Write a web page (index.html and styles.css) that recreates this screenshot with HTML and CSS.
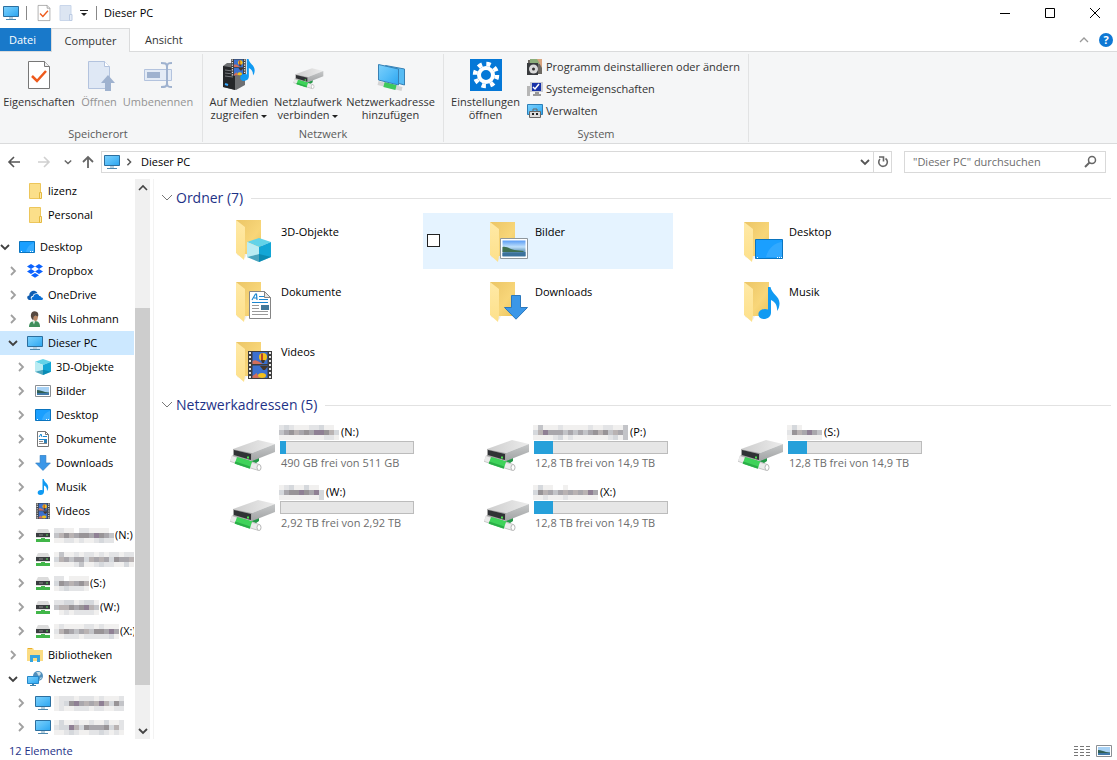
FILE: index.html
```html
<!DOCTYPE html>
<html lang="de">
<head>
<meta charset="utf-8">
<title>Dieser PC</title>
<link rel="stylesheet" href="styles.css">
</head>
<body>
<svg class="sprite" width="0" height="0" aria-hidden="true">
  <defs>
    <linearGradient id="gScreen" x1="0" y1="0" x2="1" y2="1"><stop offset="0" stop-color="#7dd0fb"/><stop offset=".5" stop-color="#55bdf8"/><stop offset="1" stop-color="#2ba5f0"/></linearGradient>
    <linearGradient id="gFlap" x1="0" y1="0" x2="0" y2="1"><stop offset="0" stop-color="#ffe9a6"/><stop offset="1" stop-color="#fde08a"/></linearGradient>
    <linearGradient id="gBack" x1="0" y1="0" x2="1" y2="1"><stop offset="0" stop-color="#ebc566"/><stop offset=".6" stop-color="#f8d679"/><stop offset="1" stop-color="#eac45c"/></linearGradient>
    <linearGradient id="gDrive" x1="0" y1="0" x2="1" y2="0"><stop offset="0" stop-color="#cdcdcd"/><stop offset="1" stop-color="#ececec"/></linearGradient>
    <linearGradient id="gSide" x1="0" y1="0" x2="0" y2="1"><stop offset="0" stop-color="#c6c8c9"/><stop offset="1" stop-color="#a2a4a5"/></linearGradient>
    <linearGradient id="gSky" x1="0" y1="0" x2="0" y2="1"><stop offset="0" stop-color="#5a9cf5"/><stop offset=".4" stop-color="#bfe0fb"/><stop offset=".65" stop-color="#6f9fc0"/><stop offset="1" stop-color="#3f78a8"/></linearGradient>
  </defs>
  <symbol id="pc" viewBox="0 0 16 16"><path d="M.5 1.500h15v10H.5z" fill="url(#gScreen)" stroke="#2c6f9f"/><path d="M6 12h4v2H6z" fill="#b8cfdd"/><path d="M3 14.500h10" stroke="#4d88ae"/></symbol>
  <symbol id="folder" viewBox="0 0 16 16"><path d="M2.500.5h11v15h-11z" fill="#fbdf8a" stroke="#edc65b"/><path d="M12.500 9.500h2v6h-2z" fill="#fde9ad" stroke="#e4b93f"/></symbol>
  <symbol id="desktop" viewBox="0 0 16 16"><path d="M.5 2.500h15v11H.5z" fill="#1a9fff" stroke="#0a74bf"/><path d="M7 13c1-5 4-8 8-9v9z" fill="#4bb5ff" opacity=".6"/><path d="M2 12.500h1M11 12.500h3" stroke="#fff" stroke-dasharray="1 1"/></symbol>
  <symbol id="dropbox" viewBox="0 0 16 16"><path d="M4 1 0 3.500 4 6l4-2.500zM12 1 8 3.500 12 6l4-2.500zM4 6 0 8.500 4 11l4-2.500zM12 6 8 8.500l4 2.500 4-2.500zM8 10 4 12.300l4 2.500 4-2.500z" fill="#0a62ff"/></symbol>
  <symbol id="onedrive" viewBox="0 0 16 16"><path d="M2.500 13C-.5 12.500-.5 8.500 2.300 8.500 2 5 5.500 3 8 4c1.500.6 2.300 1.500 2.500 2.300C8 5.800 6 7 5.700 9 3.500 9 3 12 5 13z" fill="#0f5cb0"/><path d="M6 13c-2-.4-2-3 .3-3 0-3.500 5-4 6-1 1.200-.1 1.700.5 1.700 1.300 2.500.2 2.500 2.500.8 2.700z" fill="#0b6fd4"/></symbol>
  <symbol id="user" viewBox="0 0 16 16"><path d="M2 16c0-4 2-6 6-6 4 0 5 3 5 6z" fill="#3f8f5c"/><path d="M5 9.500l2 4 1.500-4z" fill="#d4e5d9"/><path d="M6 5h5c0 3-1 5-2.500 5S6 8 6 5z" fill="#b98867"/><path d="M4 6C3 1 7-1 10 1c1.500 1 1.500 3 1 4.500C9 4.500 7.500 4.500 6.500 6L6.500 9C5 9 4.500 7.500 4 6z" fill="#56483f"/></symbol>
  <symbol id="cube" viewBox="0 0 24 24"><path d="M0 4 12 0l12 4-12 5z" fill="#62d3e8"/><path d="M0 4l12 5v15L0 19z" fill="#c9f1f6"/><path d="M12 9l12-5v15l-12 5z" fill="#12a6d6"/><path d="M0 19l12-3 12 3-12 5z" fill="#087da0" opacity=".65"/><path d="M12 16V9L0 4v15z" fill="#a9e8f0" opacity=".5"/></symbol>
  <symbol id="picture" viewBox="0 0 28 21"><path d="M.5.5h27v20H.5z" fill="#fff" stroke="#8f979d"/><path d="M2.500 2.500h23v16h-23z" fill="url(#gSky)"/><path d="M2.500 9c4-1 7 2 12 3l9 1v1h-21z" fill="#3f6f50"/><path d="M2.500 15c7-1 13 0 23-1v4h-23z" fill="#3c729c"/></symbol>
  <symbol id="smallPicture" viewBox="0 0 16 16"><path d="M.5 2.500h15v11H.5z" fill="#fff" stroke="#8a8f94"/><path d="M2 4h12v8H2z" fill="#a8d2f5"/><path d="M2 7c3 0 5 1 8 2l4 .5V10H2z" fill="#2f5f55"/><path d="M2 10h12v2H2z" fill="#3f78a8"/></symbol>
  <symbol id="document" viewBox="0 0 22 28"><path d="M.5.5h15l6 6v21H.5z" fill="#fff" stroke="#858585"/><path d="M15.500.5v6h6z" fill="#e4e4e4" stroke="#858585"/><path d="M3 9 6.500 3h1L8 9M5 7h3M10 5.500h5M10 8.500h9M3 11.500h16" stroke="#1a86d0" fill="none" stroke-width="1.200"/><path d="M3 14.500h7M3 17.500h7M3 20.500h16M3 23.500h16" stroke="#999"/><path d="M12 14h8v5h-8z" fill="#43799a"/></symbol>
  <symbol id="smallDocument" viewBox="0 0 16 16"><path d="M2.500.5h8l3 3v12h-11z" fill="#fff" stroke="#777"/><path d="M10.500.5v3h3" fill="none" stroke="#777"/><path d="M4 6l2-3 1 3M8 5.500h4M4 8.500h8" fill="none" stroke="#1a86d0"/><path d="M9 9h3v3H9z" fill="#2f7fb5"/><path d="M4 10.500h4M4 12.500h8" stroke="#888"/></symbol>
  <symbol id="download" viewBox="0 0 24 25"><path d="M7.500.5h9v12h7L12 24.200.5 12.500h7z" fill="#3b97e8" stroke="#2b78bd"/></symbol>
  <symbol id="note" viewBox="0 0 22 32"><path d="M10 0h2.500c1 7 9.500 9 9 17-.2 3-1 5-2.500 7 .5-6-2-9-6-11v12.500c0 4-3 6.500-7.500 6.500C-1.500 32-1.500 22 7 22c1.200 0 2 .2 3 .5z" fill="#109af2"/></symbol>
  <symbol id="video" viewBox="0 0 24 28"><path d="M0 0h24v28H0z" fill="#3d3d3d"/><path d="M2 1v27M22 1v27" stroke="#e7e7e7" stroke-width="2" stroke-dasharray="2 2"/><path d="M4.500 1h15v12h-15zM4.500 14.500h15V27h-15z" fill="#3b70cf"/><path d="M4.500 10c3-2 5 0 7 1l3 2h-10zM4.500 25l4-3 3 5h-7z" fill="#d26f5b"/><ellipse cx="15" cy="6" rx="4" ry="4" fill="#f2c01c"/><path d="M13 2.500h2V10h-2z" fill="#b8452c"/><path d="M13 9h4l-1 3h-2zM12 15h8l-3 4h-2z" fill="#453629"/><ellipse cx="14" cy="24.500" rx="4" ry="2.500" fill="#f2c01c"/></symbol>
  <symbol id="netdrive" viewBox="0 0 16 16"><path d="M3 2h10l2 4v5H1V6z" fill="#dcdcdc"/><path d="M1 6h14v4H1z" fill="#3a3d40"/><path d="M4 8h4" stroke="#888"/><path d="M11 8h2" stroke="#5ee05e"/><path d="M6 11h4v1h5v3H1v-3h5z" fill="#41b649"/></symbol>
  <symbol id="library" viewBox="0 0 16 16"><path d="M0 1h6l1 2h9v11H0z" fill="#fbdc83"/><path d="M1 1.500h4" stroke="#e9ad2c"/><path d="M3 15V8h10v7h-3v-4H6v4z" fill="#36a4df"/></symbol>
  <symbol id="network" viewBox="0 0 16 16"><circle cx="11" cy="5" r="5" fill="#4f8fbd"/><path d="M9 1c2 1 1 3 3 4l2-2-1-2zM12 9l2-3 1 1z" fill="#c8dfe8"/><path d="M.5 5.500h11v7H.5z" fill="url(#gScreen)" stroke="#2687c8"/><path d="M5 13h2v1h2v1H3v-1h2z" fill="#3e82ac"/></symbol>
  <symbol id="folderBig" viewBox="0 0 48 48"><path d="M9 40l8 3 2-4H9z" fill="#ddd" opacity=".5"/><path d="M8 5h25v34H12z" fill="url(#gBack)"/><path d="M8 5l9 7v26l-1 7-8-7z" fill="url(#gFlap)"/></symbol>
  <symbol id="drive" viewBox="0 0 48 48"><path d="M23 37l8-4v4l-7 5z" fill="#249847"/><path d="M3 34.500 31 43.500" stroke="#c4c4c4" stroke-width="7"/><path d="M3 34.500 31 43.500" stroke="#ebebeb" stroke-width="5"/><path d="M8 36l15 5" stroke="#3fd35a" stroke-width="8"/><path d="M7 38.500l15 5" stroke="#2bae48" stroke-width="2"/><ellipse cx="31" cy="43.500" rx="2" ry="3" fill="#fff" stroke="#b5b5b5"/><path d="M5 25l25-9 17 4-23 9z" fill="url(#gDrive)"/><path d="M24 29l23-9v8L24 37z" fill="url(#gSide)"/><path d="M5 25l19 4v8L5 32z" fill="#a5a5a5"/><path d="M6 26l17 4v6L6 31z" fill="#303235"/><path d="M19 32.500h2v2h-2z" fill="#48e04d"/></symbol>
  <symbol id="propDoc" viewBox="0 0 32 32"><path d="M5.500 2.500h16l5 5v22h-21z" fill="#fff" stroke="#777"/><path d="M21.500 2.500v5h5" fill="#eee" stroke="#777"/><path d="M9 17l5 5L23 12" fill="none" stroke="#ee5a1c" stroke-width="2.500"/></symbol>
  <symbol id="openDoc" viewBox="0 0 32 32"><path d="M5.500 2.500h16l5 5v22h-21z" fill="#dfe8f5" stroke="#b3c3de"/><path d="M21.500 2.500v5h5" fill="#fff" stroke="#b3c3de"/><path d="M25 16l7 8h-4v8h-6v-8h-4z" fill="#9fb2cf"/></symbol>
  <symbol id="rename" viewBox="0 0 32 32"><path d="M2.500 10.500h27v11h-27z" fill="#e3ebf6" stroke="#b3c3de"/><path d="M5 13h13v6H5z" fill="#9fb2cf"/><path d="M19 4c4 0 6 0 6 4 0-4 2-4 5-4M19 28c4 0 6 0 6-4 0 4 2 4 5 4M25 7v18" fill="none" stroke="#9fb2cf" stroke-width="2"/></symbol>
  <symbol id="media" viewBox="0 0 32 32"><path d="M0 7l4-3h18v22l-9 5L0 28z" fill="#6d6f72"/><path d="M0 7l12 2v22L0 28z" fill="#242629"/><path d="M2 11l8 1M2 14l8 1M2 17l8 1" stroke="#75787c"/><path d="M2 25l3 1" stroke="#38a9ff" stroke-width="2"/><use href="#video" x="7" y="0" width="17" height="17"/><use href="#note" x="17" y="0" width="15" height="22"/></symbol>
  <symbol id="netaddr" viewBox="0 0 32 32"><path d="M10.500 6.500 29.500 10v16L11 21z" fill="#57bcf4" stroke="#3781b5"/><path d="M3 24l24 6" stroke="#d4d4d4" stroke-width="4"/><path d="M9 25.500l12 3" stroke="#3fc95c" stroke-width="5"/><path d="M3.500 5.500 23.500 10v16l-20-5z" fill="url(#gScreen)" stroke="#3781b5"/></symbol>
  <symbol id="gear" viewBox="0 0 32 32"><path d="M0 0h32v32H0z" fill="#0578d7"/><circle cx="16" cy="16" r="11" fill="none" stroke="#fff" stroke-width="4.500" stroke-dasharray="4.300 4.340"/><circle cx="16" cy="16" r="7" fill="none" stroke="#fff" stroke-width="4"/></symbol>
  <symbol id="uninstall" viewBox="0 0 16 16"><path d="M1 1h14v14H1z" fill="#6e6a63"/><path d="M3 0h11v5H3z" fill="#8cae7a"/><path d="M10 0h5v9z" fill="#d9a580"/><path d="M0 4h11v12H0z" fill="#393c3f"/><circle cx="6.500" cy="10" r="4.500" fill="#dadada"/><circle cx="6.500" cy="10" r="1.500" fill="#333"/></symbol>
  <symbol id="sysprops" viewBox="0 0 16 16"><path d="M0 5h3v10H0z" fill="#b6b6b6"/><path d="M3 1h13v10H3z" fill="#c9cbd3"/><path d="M5 2h9v8H5z" fill="#1832a8"/><path d="M6 6l2 2 4-5" stroke="#fff" fill="none" stroke-width="1.500"/><path d="M8 11h4v2h2v2H6v-2h2z" fill="#999"/></symbol>
  <symbol id="manage" viewBox="0 0 16 16"><path d="M.5 1.500h15v10H.5z" fill="url(#gScreen)" stroke="#2c7fb8"/><path d="M2.500 8.500h11v6h-11z" fill="#dcdcdc" stroke="#666"/><path d="M6 8V6h4v2" stroke="#666" fill="none"/><path d="M5 10h2v2H5zM9 10h2v2H9z" fill="#222"/></symbol>
  <symbol id="right" viewBox="0 0 10 10"><path d="M3 1l4 4-4 4" fill="none" stroke="currentColor" stroke-width="1.800"/></symbol>
  <symbol id="down" viewBox="0 0 10 10"><path d="M1 3l4 4 4-4" fill="none" stroke="currentColor" stroke-width="1.800"/></symbol>
  <symbol id="f-3d" viewBox="0 0 48 48"><use href="#folderBig" y="-2" width="48" height="48"/><use href="#cube" x="19" y="21" width="24" height="24"/></symbol>
  <symbol id="f-pic" viewBox="0 0 48 48"><use href="#folderBig" width="48" height="48"/><use href="#picture" x="18" y="21" width="28" height="21"/></symbol>
  <symbol id="f-desk" viewBox="0 0 48 48"><use href="#folderBig" width="48" height="48"/><path d="M19.500 22.500h27v19h-27z" fill="#1a9fff" stroke="#0a74bf"/><path d="M30 40c2-8 8-14 16-15v15z" fill="#43b0ff" opacity=".6"/><path d="M21 40.500h1M41 40.500h5" stroke="#fff" stroke-dasharray="1 1"/></symbol>
  <symbol id="f-doc" viewBox="0 0 48 48"><use href="#folderBig" width="48" height="48"/><use href="#document" x="21" y="14" width="22" height="28"/></symbol>
  <symbol id="f-down" viewBox="0 0 48 48"><use href="#folderBig" width="48" height="48"/><use href="#download" x="22" y="18" width="24" height="25"/></symbol>
  <symbol id="f-music" viewBox="0 0 48 48"><use href="#folderBig" width="48" height="48"/><use href="#note" x="22" y="10" width="22" height="32"/></symbol>
  <symbol id="f-video" viewBox="0 0 48 48"><use href="#folderBig" width="48" height="48"/><use href="#video" x="20" y="14" width="24" height="28"/></symbol>
</svg>

<div class="window">
  <header class="titlebar">
    <svg class="i16"><use href="#pc"/></svg>
    <span class="bar"></span>
    <button class="quick" aria-label="Eigenschaften"><svg class="i18"><use href="#propDoc"/></svg></button>
    <button class="quick" aria-label="Neuer Ordner"><svg class="i16" viewBox="0 0 16 16"><path d="M2 .5h11v15H2z" fill="#dce5f2" stroke="#c9d6ea"/><path d="M11.500 9.500h2.500v6h-2.500z" fill="#e7eef8" stroke="#bccbe3"/></svg></button>
    <button class="quick small" aria-label="Symbolleiste anpassen"><svg width="8" height="8" viewBox="0 0 8 8"><path d="M0 1.500h8" stroke="#222"/><path d="M1 4h6L4 7z" fill="#222"/></svg></button>
    <span class="bar second"></span>
    <h1>Dieser PC</h1>
    <div class="controls">
      <button aria-label="Minimieren"><svg width="10" height="10"><path d="M0 5.500h10" stroke="#000"/></svg></button>
      <button aria-label="Maximieren"><svg width="10" height="10"><path d="M.5.5h9v9h-9z" fill="none" stroke="#000"/></svg></button>
      <button aria-label="Schließen"><svg width="10" height="10"><path d="M0 0l10 10M10 0L0 10" stroke="#000"/></svg></button>
    </div>
  </header>

  <nav class="tabs">
    <button class="tab file">Datei</button>
    <button class="tab active">Computer</button>
    <button class="tab view">Ansicht</button>
    <div class="tabtools">
      <button aria-label="Menüband minimieren"><svg width="10" height="10" viewBox="0 0 10 10"><path d="M1 7l4-4 4 4" fill="none" stroke="#999" stroke-width="1.300"/></svg></button>
      <button class="help" aria-label="Hilfe">?</button>
    </div>
  </nav>

  <section class="ribbon">
    <div class="group g1">
      <div class="buttons">
        <button class="big w78"><svg class="i32"><use href="#propDoc"/></svg><span>Eigenschaften</span></button>
        <button class="big w42" disabled><svg class="i32"><use href="#openDoc"/></svg><span>Öffnen</span></button>
        <button class="big w76" disabled><svg class="i32"><use href="#rename"/></svg><span>Umbenennen</span></button>
      </div>
      <h2>Speicherort</h2>
    </div>
    <div class="group g2">
      <div class="buttons">
        <button class="big w72"><svg class="i32"><use href="#media"/></svg><span>Auf Medien<br>zugreifen <i class="caret"></i></span></button>
        <button class="big w66"><svg class="i32" viewBox="0 0 48 48"><use href="#drive" y="-2" width="48" height="48"/></svg><span>Netzlaufwerk<br>verbinden <i class="caret"></i></span></button>
        <button class="big w99"><svg class="i32"><use href="#netaddr"/></svg><span>Netzwerkadresse<br>hinzufügen</span></button>
      </div>
      <h2>Netzwerk</h2>
    </div>
    <div class="group g3">
      <div class="buttons">
        <button class="big w83"><svg class="i32"><use href="#gear"/></svg><span>Einstellungen<br>öffnen</span></button>
        <div class="stack">
          <button><svg class="i16"><use href="#uninstall"/></svg>Programm deinstallieren oder ändern</button>
          <button><svg class="i16"><use href="#sysprops"/></svg>Systemeigenschaften</button>
          <button><svg class="i16"><use href="#manage"/></svg>Verwalten</button>
        </div>
      </div>
      <h2>System</h2>
    </div>
  </section>

  <div class="location">
    <button aria-label="Zurück"><svg width="14" height="14" viewBox="0 0 14 14"><path d="M13 7H2M7 2L2 7l5 5" fill="none" stroke="#555" stroke-width="1.600"/></svg></button>
    <button aria-label="Vorwärts" disabled><svg width="14" height="14" viewBox="0 0 14 14"><path d="M1 7h11M7 2l5 5-5 5" fill="none" stroke="#d0d0d0" stroke-width="1.600"/></svg></button>
    <button class="recent" aria-label="Zuletzt besucht"><svg width="8" height="8" viewBox="0 0 10 10"><use href="#down"/></svg></button>
    <button class="up" aria-label="Nach oben"><svg width="14" height="14" viewBox="0 0 14 14"><path d="M7 13V2M2 7l5-5 5 5" fill="none" stroke="#666" stroke-width="1.800"/></svg></button>
    <div class="address">
      <svg class="i16"><use href="#pc"/></svg>
      <svg class="crumb" width="8" height="8"><use href="#right"/></svg>
      <a href="#">Dieser PC</a>
      <button class="drop" aria-label="Verlauf"><svg width="10" height="10"><use href="#down"/></svg></button>
      <button class="refresh" aria-label="Aktualisieren"><svg width="12" height="12" viewBox="0 0 12 12"><path d="M8.500 2.500A4.300 4.300 0 1 1 3 3" fill="none" stroke="#666" stroke-width="1.600"/><path d="M2 1h4.500v4.500" fill="none" stroke="#666" stroke-width="1.600"/></svg></button>
    </div>
    <label class="search">
      <input type="text" aria-label="Suche" placeholder="&quot;Dieser PC&quot; durchsuchen">
      <svg width="13" height="13" viewBox="0 0 13 13"><circle cx="8" cy="5" r="3.500" fill="none" stroke="#666" stroke-width="1.500"/><path d="M5.500 7.500L1 12" stroke="#666" stroke-width="2"/></svg>
    </label>
  </div>

  <main class="body">
    <nav class="side">
      <ul class="tree">
        <li class="l1"><i></i><svg class="i16"><use href="#folder"/></svg>lizenz</li>
        <li class="l1 last"><i></i><svg class="i16"><use href="#folder"/></svg>Personal</li>
        <li class="open"><svg class="chev"><use href="#down"/></svg><svg class="i16"><use href="#desktop"/></svg>Desktop</li>
        <li class="l1"><svg class="chev"><use href="#right"/></svg><svg class="i16"><use href="#dropbox"/></svg>Dropbox</li>
        <li class="l1"><svg class="chev"><use href="#right"/></svg><svg class="i16"><use href="#onedrive"/></svg>OneDrive</li>
        <li class="l1"><svg class="chev"><use href="#right"/></svg><svg class="i16"><use href="#user"/></svg>Nils Lohmann</li>
        <li class="l1 open selected"><svg class="chev"><use href="#down"/></svg><svg class="i16"><use href="#pc"/></svg>Dieser PC</li>
        <li class="l2"><svg class="chev"><use href="#right"/></svg><svg class="i16"><use href="#cube"/></svg>3D-Objekte</li>
        <li class="l2"><svg class="chev"><use href="#right"/></svg><svg class="i16"><use href="#smallPicture"/></svg>Bilder</li>
        <li class="l2"><svg class="chev"><use href="#right"/></svg><svg class="i16"><use href="#desktop"/></svg>Desktop</li>
        <li class="l2"><svg class="chev"><use href="#right"/></svg><svg class="i16"><use href="#smallDocument"/></svg>Dokumente</li>
        <li class="l2"><svg class="chev"><use href="#right"/></svg><svg class="i16"><use href="#download"/></svg>Downloads</li>
        <li class="l2"><svg class="chev"><use href="#right"/></svg><svg class="i16"><use href="#note"/></svg>Musik</li>
        <li class="l2"><svg class="chev"><use href="#right"/></svg><svg class="i16"><use href="#video"/></svg>Videos</li>
        <li class="l2"><svg class="chev"><use href="#right"/></svg><svg class="i16"><use href="#netdrive"/></svg><span class="mosaic" data-cells="221102211110/457567768764/112212112322"></span>(N:)</li>
        <li class="l2"><svg class="chev"><use href="#right"/></svg><svg class="i16"><use href="#netdrive"/></svg><span class="mosaic" data-cells="14112122121221223/35646635656376654/11112411232211312"></span></li>
        <li class="l2"><svg class="chev"><use href="#right"/></svg><svg class="i16"><use href="#netdrive"/></svg><span class="mosaic" data-cells="2201111/3765675/1232221"></span>(S:)</li>
        <li class="l2"><svg class="chev"><use href="#right"/></svg><svg class="i16"><use href="#netdrive"/></svg><span class="mosaic" data-cells="223312331/455767854/012122221"></span>(W:)</li>
        <li class="l2"><svg class="chev"><use href="#right"/></svg><svg class="i16"><use href="#netdrive"/></svg><span class="mosaic" data-cells="1211112212111/2576465477686/1122212222231"></span>(X:)</li>
        <li class="l1"><svg class="chev"><use href="#right"/></svg><svg class="i16"><use href="#library"/></svg>Bibliotheken</li>
        <li class="l1 open"><svg class="chev"><use href="#down"/></svg><svg class="i16"><use href="#network"/></svg>Netzwerk</li>
        <li class="l2"><svg class="chev"><use href="#right"/></svg><svg class="i16"><use href="#pc"/></svg><span class="mosaic" data-cells="12221222121112/12378656585374/12112221221122"></span></li>
        <li class="l2"><svg class="chev"><use href="#right"/></svg><svg class="i16"><use href="#pc"/></svg><span class="mosaic" data-cells="13112112113112/23385376667352/11232112232121"></span></li>
      </ul>
      <div class="scroll">
        <button aria-label="Nach oben scrollen"><svg width="10" height="10" viewBox="0 0 10 10"><path d="M1 7l4-4 4 4" fill="none" stroke="#444" stroke-width="1.600"/></svg></button>
        <div class="track"><div class="thumb"></div></div>
        <button aria-label="Nach unten scrollen"><svg width="10" height="10"><use href="#down"/></svg></button>
      </div>
    </nav>

    <div class="content">
      <h2 class="section"><svg width="12" height="12" viewBox="0 0 12 12"><path d="M1 3l5 5 5-5" fill="none" stroke="#777"/></svg>Ordner (7)</h2>
      <div class="grid">
        <div class="tile"><svg class="i48"><use href="#f-3d"/></svg><span>3D-Objekte</span></div>
        <div class="tile hover"><input type="checkbox" aria-label="Bilder auswählen"><svg class="i48"><use href="#f-pic"/></svg><span>Bilder</span></div>
        <div class="tile"><svg class="i48"><use href="#f-desk"/></svg><span>Desktop</span></div>
        <div class="tile"><svg class="i48"><use href="#f-doc"/></svg><span>Dokumente</span></div>
        <div class="tile"><svg class="i48"><use href="#f-down"/></svg><span>Downloads</span></div>
        <div class="tile"><svg class="i48"><use href="#f-music"/></svg><span>Musik</span></div>
        <div class="tile"><svg class="i48"><use href="#f-video"/></svg><span>Videos</span></div>
      </div>
      <h2 class="section second"><svg width="12" height="12" viewBox="0 0 12 12"><path d="M1 3l5 5 5-5" fill="none" stroke="#777"/></svg>Netzwerkadressen (5)</h2>
      <div class="grid">
        <div class="tile drive"><svg class="i48"><use href="#drive"/></svg><div><p><span class="mosaic" data-cells="232111223110/467567688753/111111111221"></span>(N:)</p><progress max="134" value="6" aria-label="Belegung N:"></progress><small>490 GB frei von 511 GB</small></div></div>
        <div class="tile drive"><svg class="i48"><use href="#drive"/></svg><div><p><span class="mosaic" data-cells="1411121111121122114/3586664646467574564/1111231211111112314"></span>(P:)</p><progress max="134" value="19" aria-label="Belegung P:"></progress><small>12,8 TB frei von 14,9 TB</small></div></div>
        <div class="tile drive"><svg class="i48"><use href="#drive"/></svg><div><p><span class="mosaic" data-cells="1310000/2756864/1111111"></span>(S:)</p><progress max="134" value="19" aria-label="Belegung S:"></progress><small>12,8 TB frei von 14,9 TB</small></div></div>
        <div class="tile drive"><svg class="i48"><use href="#drive"/></svg><div><p><span class="mosaic" data-cells="123113110/367787683/111111113"></span>(W:)</p><progress max="134" value="0" aria-label="Belegung W:"></progress><small>2,92 TB frei von 2,92 TB</small></div></div>
        <div class="tile drive"><svg class="i48"><use href="#drive"/></svg><div><p><span class="mosaic" data-cells="1311001000000/3756465656586/1121112111111"></span>(X:)</p><progress max="134" value="19" aria-label="Belegung X:"></progress><small>12,8 TB frei von 14,9 TB</small></div></div>
      </div>
    </div>
  </main>

  <footer class="status">
    <span>12 Elemente</span>
    <div class="views">
      <button aria-label="Details"><svg width="16" height="12" viewBox="0 0 16 12"><path d="M0 1.500h4M0 4.500h4M0 7.500h4M0 10.500h4M6 1.500h4M6 4.500h4M6 7.500h4M6 10.500h4M12 1.500h4M12 4.500h4M12 7.500h4M12 10.500h4" stroke="#777"/></svg></button>
      <button class="current" aria-label="Große Symbole"><svg class="i16"><use href="#smallPicture"/></svg></button>
    </div>
  </footer>
</div>
<script src="mosaic.js"></script>
</body>
</html>
```
FILE: mosaic.js
```js
// Draws redacted names as rows of five-pixel blocks; each digit is a palette index.
const palette = ["#ffffff", "#f1f0ef", "#e3e4e6", "#d5d8dc", "#c3c4c8", "#b9b3b3", "#a9a7ac", "#989497", "#8f8094"];
const cell = 5;
const ns = "http://www.w3.org/2000/svg";
for (const el of document.querySelectorAll(".mosaic")) {
  const rows = el.dataset.cells.split("/");
  const svg = document.createElementNS(ns, "svg");
  svg.setAttribute("width", rows[0].length * cell);
  svg.setAttribute("height", rows.length * cell);
  rows.forEach((row, y) => [...row].forEach((digit, x) => {
    const rect = document.createElementNS(ns, "rect");
    rect.setAttribute("x", x * cell);
    rect.setAttribute("y", y * cell);
    rect.setAttribute("width", cell);
    rect.setAttribute("height", cell);
    rect.setAttribute("fill", palette[digit]);
    svg.append(rect);
  }));
  el.append(svg);
}
```
FILE: styles.css
```css
* { box-sizing: border-box; }
body { margin: 0; background: #fff; color: #000; font: 11px/16px "Open Sans", "Noto Sans", sans-serif; }
h1, h2, p, ul { margin: 0; padding: 0; font-size: 11px; font-weight: 400; }
button { margin: 0; padding: 0; border: 0; background: none; color: inherit; font: inherit; }
svg { display: block; flex: none; }
.sprite { position: absolute; }
.i16 { width: 16px; height: 16px; }
.i18 { width: 18px; height: 18px; }
.i32 { width: 32px; height: 32px; }
.i48 { width: 48px; height: 48px; }

.window { display: flex; flex-direction: column; min-height: 100vh; }

.titlebar { display: flex; align-items: center; height: 28px; padding: 0 0 3px 3px; }
.titlebar .bar { width: 1px; height: 14px; margin: 0 6px 0 7px; background: #888; }
.titlebar .bar.second { margin: 0 7px 0 5px; }
.titlebar .quick { display: grid; place-items: center; width: 22px; height: 22px; }
.titlebar .quick.small { width: 14px; }
.titlebar .controls { display: flex; margin-left: auto; }
.titlebar h1 { font-size: 11px; }
.controls button { display: grid; place-items: center; width: 45px; height: 25px; }

.tabs { display: flex; height: 24px; border-bottom: 1px solid #dadbdc; }
.tab { height: 24px; padding: 0 15px; color: #333; }
.tab.file { width: 51px; padding: 0 6px 0 0; background: #1979ca; color: #fff; height: 23px; }
.tab.active { width: 79px; padding: 0; border: 1px solid #dadbdc; border-bottom: 0; background: #f5f6f7; }
.tabtools { display: flex; align-items: center; gap: 10px; margin-left: auto; padding-right: 4px; }
.tabtools .help { width: 14px; height: 14px; border-radius: 50%; background: #0f78d4; color: #fff; line-height: 14px; font-weight: 700; }

.ribbon { display: flex; height: 92px; padding-top: 2px; background: #f5f6f7; border-bottom: 1px solid #dadbdc; color: #333; }
.group { display: flex; flex: none; flex-direction: column; justify-content: space-between; margin-bottom: 1px; border-right: 1px solid #e2e3e4; }
.group h2 { text-align: center; color: #5a5a5a; }
.g1 { width: 203px; padding-right: 6px; }
.g2 { width: 241px; }
.g3 { width: 305px; }
.buttons { display: flex; padding-top: 5px; }
.big { display: flex; flex: none; flex-direction: column; align-items: center; gap: 4px; line-height: 13px; white-space: nowrap; }
.big:disabled { color: #939393; }
.w42 { width: 42px; }
.w66 { width: 66px; }
.w72 { width: 72px; }
.w76 { width: 76px; }
.w78 { width: 78px; }
.w83 { width: 83px; }
.w99 { width: 99px; }
.caret { display: inline-block; border: 3px solid transparent; border-top-color: #222; border-bottom: 0; vertical-align: middle; }
.stack { display: flex; flex-direction: column; margin-top: -3px; }
.stack button { display: flex; align-items: center; gap: 3px; height: 22px; white-space: nowrap; }

.location { display: flex; align-items: center; height: 35px; padding: 0 11px 0 7px; color: #666; }
.location > button { display: grid; place-items: center; width: 30px; height: 22px; }
.location > button:first-child { width: 14px; margin-right: 8px; }
.location > .recent { width: 18px; }
.location > .up { width: 22px; margin-right: 2px; }
.address { display: flex; flex: 1; align-items: center; height: 22px; padding-left: 2px; border: 1px solid #d9d9d9; color: #555; }
.address .crumb { margin: 0 8px 0 5px; }
.address a { color: #000; text-decoration: none; }
.address .drop { display: grid; place-items: center; width: 16px; margin-left: auto; }
.address .refresh { display: grid; place-items: center; width: 18px; height: 20px; border-left: 1px solid #d9d9d9; }
.search { display: flex; align-items: center; width: 202px; height: 22px; margin-left: 12px; padding: 0 8px; border: 1px solid #d9d9d9; }
.search input { flex: 1; min-width: 0; border: 0; padding: 0; outline: 0; font: inherit; }
.search input::placeholder { color: #6d6d6d; opacity: 1; }

.body { display: flex; flex: 1; }
.side { display: flex; width: 154px; border-right: 1px solid #f3f3f3; }
.tree { width: 134px; list-style: none; }
.tree li { display: flex; align-items: center; height: 24px; white-space: nowrap; overflow: hidden; }
.tree li.l1 { padding-left: 8px; }
.tree li.l2 { padding-left: 16px; }
.tree .last { margin-bottom: 8px; }
.tree .chev, .tree i { flex: none; width: 10px; height: 10px; margin-right: 9px; color: #a0a0a0; }
.tree .i16 { margin-right: 5px; }
.tree .open .chev { color: #404040; }
.tree .selected { background: #cce8ff; }
.tree .mosaic { margin: 0 1px 0 -2px; }
.scroll { display: flex; flex-direction: column; width: 15px; margin-left: 1px; background: #f0f0f0; color: #444; }
.scroll button { display: grid; place-items: center; height: 17px; }
.track { display: flex; flex-direction: column; justify-content: flex-end; flex: 1; padding-bottom: 37px; }
.thumb { flex: 0 0 77%; background: #cdcdcd; }

.content { flex: 1; padding: 9px 6px 0 7px; }
.section { display: flex; align-items: center; gap: 3px; height: 20px; margin-bottom: 5px; color: #1e3287; font-size: 14px; line-height: 20px; }
.section::after { content: ""; flex: 1; height: 1px; margin-left: 5px; background: #e2e2e2; }
.section.second { margin-top: 6px; }
.grid { display: grid; grid-template-columns: repeat(auto-fill, 250px); gap: 4px; padding-left: 8px; }
.tile { position: relative; display: flex; gap: 4px; height: 56px; padding: 4px 0 0 59px; }
.tile > span { padding: 7px 0 0 1px; }
.tile.hover { background: #e5f3ff; }
.tile input { position: absolute; left: 4px; top: 21px; appearance: none; width: 13px; height: 13px; margin: 0; border: 1px solid #222; background: #fff; }
.drive p { display: flex; align-items: center; height: 17px; padding-bottom: 1px; }
.drive > div { width: 134px; }
.drive .mosaic { margin-right: 2px; margin-left: -1px; }
.drive progress { display: block; appearance: none; width: 134px; height: 13px; border: 0; }
progress::-webkit-progress-bar { background: #e6e6e6; box-shadow: inset 0 0 0 1px #bcbcbc; }
progress::-webkit-progress-value { background: #26a0da; }
.drive small { display: block; padding: 1px 0 0 1px; color: #6d6d6d; font-size: 11px; white-space: nowrap; }

.status { display: flex; align-items: center; height: 21px; padding: 3px 4px 0 9px; color: #1e3287; }
.views { display: flex; gap: 4px; margin-left: auto; }
.views button { display: grid; place-items: center; width: 18px; height: 16px; }
```
